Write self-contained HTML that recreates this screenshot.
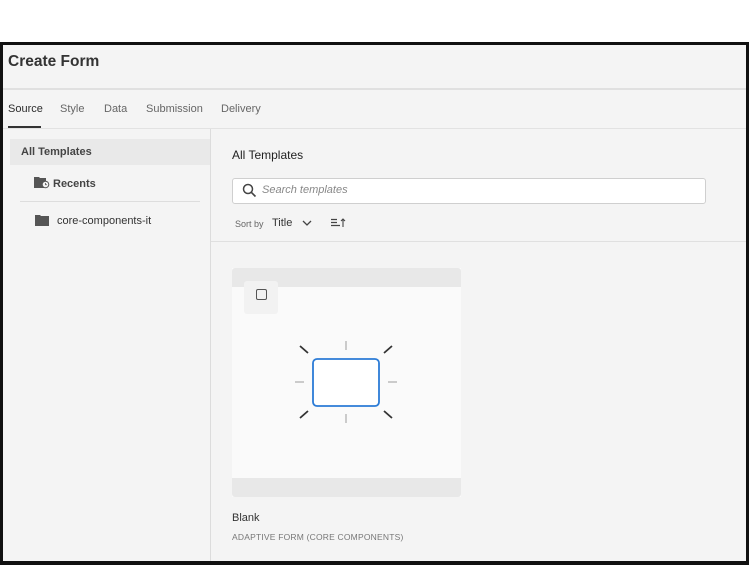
<!DOCTYPE html>
<html><head><style>
*{margin:0;padding:0;box-sizing:border-box}
body{width:750px;height:565px;background:#fff;font-family:"Liberation Sans",sans-serif;position:relative;overflow:hidden;color:#2c2c2c}
.frame{position:absolute;left:0;top:42px;width:749px;height:523px;border:3px solid #111;border-bottom-width:4px;background:#f4f4f4}
.a{position:absolute}
</style></head><body>
<div class="frame"></div>
<div class="a" style="left:8px;top:53px;font-size:15.5px;font-weight:bold;color:#333">Create Form</div>
<div class="a" style="left:3px;top:88px;width:743px;height:2px;background:#e0e0e0"></div>
<div class="a" style="left:8px;top:103px;font-size:11px;color:#2c2c2c">Source</div>
<div class="a" style="left:60px;top:103px;font-size:11px;color:#666">Style</div>
<div class="a" style="left:104px;top:103px;font-size:11px;color:#666">Data</div>
<div class="a" style="left:146px;top:103px;font-size:11px;color:#666">Submission</div>
<div class="a" style="left:221px;top:103px;font-size:11px;color:#666">Delivery</div>
<div class="a" style="left:8px;top:126px;width:33px;height:2px;background:#333"></div>
<div class="a" style="left:3px;top:128px;width:743px;height:1px;background:#e2e2e2"></div>
<div class="a" style="left:210px;top:129px;width:1px;height:432px;background:#dcdcdc"></div>
<div class="a" style="left:10px;top:139px;width:200px;height:26px;background:#e9e9e9"></div>
<div class="a" style="left:21px;top:146px;font-size:11px;font-weight:bold;color:#444">All Templates</div>
<svg class="a" style="left:34px;top:175px" width="16" height="14" viewBox="0 0 16 14"><path d="M0 2h5l1 1h6v3H0z M0 6h10v7H0z" fill="#555"/><circle cx="11.5" cy="9.5" r="3.3" fill="#f4f4f4" stroke="#555" stroke-width="1"/><path d="M11.5 8v1.7h1.3" stroke="#555" fill="none" stroke-width="0.8"/></svg>
<div class="a" style="left:53px;top:178px;font-size:11px;font-weight:bold;color:#444">Recents</div>
<div class="a" style="left:20px;top:201px;width:180px;height:1px;background:#ddd"></div>
<svg class="a" style="left:35px;top:214px" width="14" height="12" viewBox="0 0 14 12"><path d="M0 1h5l1 1h8v10H0z" fill="#555"/></svg>
<div class="a" style="left:57px;top:215px;font-size:11px;color:#333">core-components-it</div>
<div class="a" style="left:232px;top:148px;font-size:12px;color:#222">All Templates</div>
<div class="a" style="left:232px;top:178px;width:474px;height:26px;background:#fff;border:1px solid #cfcfcf;border-radius:3px"></div>
<svg class="a" style="left:242px;top:183px" width="15" height="15" viewBox="0 0 15 15"><circle cx="6" cy="6" r="4.5" fill="none" stroke="#444" stroke-width="1.5"/><path d="M9.3 9.3L13.5 13.5" stroke="#444" stroke-width="1.6"/></svg>
<div class="a" style="left:262px;top:184px;font-size:11px;font-style:italic;color:#888">Search templates</div>
<div class="a" style="left:235px;top:219px;font-size:9px;color:#666">Sort by</div>
<div class="a" style="left:272px;top:217px;font-size:11px;color:#333">Title</div>
<svg class="a" style="left:302px;top:219px" width="10" height="8" viewBox="0 0 10 8"><path d="M1 2l4 4 4-4" fill="none" stroke="#444" stroke-width="1.3"/></svg>
<svg class="a" style="left:331px;top:217px" width="16" height="12" viewBox="0 0 16 12"><path d="M0 2.5h6M0 5.5h6M0 8.5h9" stroke="#444" stroke-width="1.2"/><path d="M12 10V2M10 4l2-2 2 2" stroke="#444" fill="none" stroke-width="1.1"/></svg>
<div class="a" style="left:211px;top:241px;width:535px;height:1px;background:#e0e0e0"></div>
<div class="a" style="left:232px;top:268px;width:229px;height:229px;background:#fafafa"></div>
<div class="a" style="left:232px;top:268px;width:229px;height:19px;background:#e8e8e8;border-radius:3px 3px 0 0"></div>
<div class="a" style="left:232px;top:478px;width:229px;height:19px;background:#e8e8e8;border-radius:0 0 3px 3px"></div>
<div class="a" style="left:244px;top:281px;width:34px;height:33px;background:#f2f2f2;border-radius:3px"></div>
<div class="a" style="left:256px;top:289px;width:11px;height:11px;border:1.5px solid #555;border-radius:2px"></div>
<svg class="a" style="left:290px;top:336px" width="112" height="90" viewBox="0 0 112 90">
<rect x="23" y="23" width="66" height="47" rx="4" fill="#fff" stroke="#2b7bd6" stroke-width="1.8"/>
<path d="M56 5v9M56 78v9M5 46h9M98 46h9" stroke="#bbb" stroke-width="1.5"/>
<path d="M10 10l8 7M102 10l-8 7M10 82l8-7M102 82l-8-7" stroke="#333" stroke-width="1.8"/>
</svg>
<div class="a" style="left:232px;top:512px;font-size:11px;color:#333">Blank</div>
<div class="a" style="left:232px;top:532px;font-size:8.5px;letter-spacing:0.2px;color:#777">ADAPTIVE FORM (CORE COMPONENTS)</div>
</body></html>
